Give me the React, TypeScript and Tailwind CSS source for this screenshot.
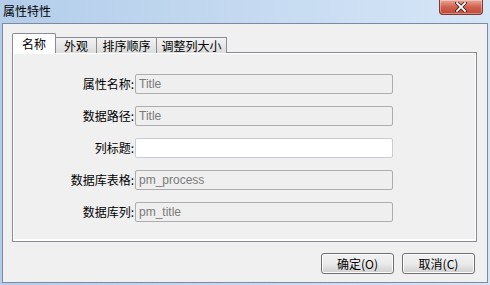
const cjk = { fontFamily: '"Noto Sans CJK SC", "Noto Sans", sans-serif' };

const rows = [
  { label: "属性名称:", value: "Title", editable: false },
  { label: "数据路径:", value: "Title", editable: false },
  { label: "列标题:", value: "", editable: true },
  { label: "数据库表格:", value: "pm_process", editable: false },
  { label: "数据库列:", value: "pm_title", editable: false },
];

const tabs = [
  { t: "名称", w: "w-[44px]" },
  { t: "外观", w: "w-[41px]" },
  { t: "排序顺序", w: "w-[60px]" },
  { t: "调整列大小", w: "w-[70px]" },
];

function CloseButton() {
  return (
    <div className="absolute right-[5px] top-0 w-[44px] h-[15px] rounded-b-[4px] border border-t-0 border-[#7a3a34] bg-gradient-to-b from-[#e9a797] via-[#d0604f] to-[#c14a36] flex items-center justify-center shadow-[inset_0_0_0_1px_rgba(255,255,255,0.35)]">
      <svg viewBox="0 0 12 10" className="w-[12px] h-[10px]">
        <path d="M2 1 L10 9 M10 1 L2 9" stroke="#3b1b16" strokeWidth={3.4} strokeLinecap="square" />
        <path d="M2 1 L10 9 M10 1 L2 9" stroke="#ffffff" strokeWidth={1.8} strokeLinecap="square" />
      </svg>
    </div>
  );
}

export default function App() {
  return (
    <div className="w-[490px] h-[285px] bg-gradient-to-r from-[#b3cdea] to-[#d6e6f7] flex flex-col px-[2px] pb-[2px] overflow-hidden" style={cjk}>
      {/* title bar */}
      <div className="relative h-[23px] shrink-0 flex items-center pl-[1px] pb-[1px]">
        <span className="text-[12px] text-black leading-none">属性特性</span>
        <CloseButton />
      </div>

      {/* client */}
      <div className="flex-1 border border-[#7d8aa0] bg-[#f0f0f0] flex flex-col pl-[9px] pt-[9px]">
        {/* tab strip */}
        <div className="flex items-end h-[20px] relative z-10 -mb-[1px]">
          {tabs.map(({ t, w }, i) =>
            i === 0 ? (
              <div key={t} className={`h-[20px] ${w} bg-white border border-b-0 border-[#898c95] rounded-t-[2px] flex items-center justify-center text-[12px] text-black`}>
                {t}
              </div>
            ) : (
              <div key={t} className={`h-[16px] ${w} bg-gradient-to-b from-[#f3f3f3] to-[#dcdcdc] border border-l-0 border-b-0 border-[#898c95] flex items-center justify-center text-[12px] text-black leading-none`}>
                {t}
              </div>
            )
          )}
        </div>

        {/* panel */}
        <div className="w-[465px] h-[190px] border border-[#898c95] bg-[#f0f0f0] shadow-[inset_1px_1px_0_#ffffff,inset_-1px_-2px_0_#ffffff] flex flex-col gap-[12px] pt-[21px]">
          {rows.map((r) => (
            <div key={r.label} className="flex items-center h-[20px]">
              <div className="w-[122px] text-right text-[12px] text-black pr-[1px] leading-none">{r.label}</div>
              <div
                className={`w-[258px] h-[20px] border rounded-[2px] flex items-center pl-[3px] text-[12px] text-[#7a7a7a] ${
                  r.editable ? "bg-white border-[#c9ccd2]" : "bg-[#efefef] border-[#acacac]"
                }`}
                style={{ fontFamily: '"Liberation Sans", Arial, sans-serif' }}
              >
                {r.value}
              </div>
            </div>
          ))}
        </div>

        {/* buttons */}
        <div className="flex justify-end gap-[8px] pr-[12px] mt-[11px]">
          {["确定(O)", "取消(C)"].map((b) => (
            <div
              key={b}
              className="w-[73px] h-[21px] rounded-[3px] border border-[#707070] bg-gradient-to-b from-[#f2f2f2] via-[#ebebeb] to-[#cfcfcf] shadow-[inset_0_0_0_1px_#fcfcfc] flex items-center justify-center text-[12px] text-black"
            >
              {b}
            </div>
          ))}
        </div>
      </div>
    </div>
  );
}
